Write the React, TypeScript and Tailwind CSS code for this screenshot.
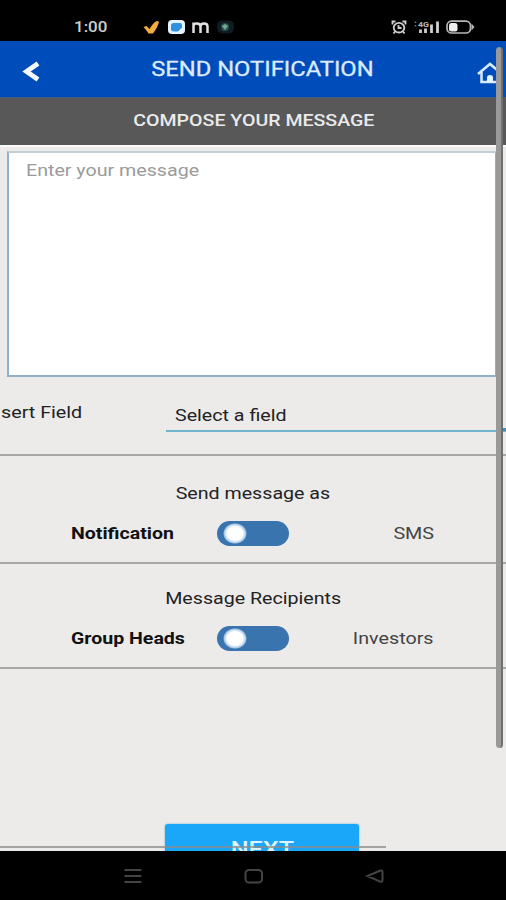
import * as React from "react";

// Roboto drawn a bit wider than its natural width.
const Wide = ({ children, className = "" }: { children: React.ReactNode; className?: string }) => (
  <span className={`inline-block whitespace-nowrap ${className}`}>{children}</span>
);

const StatusBar = () => (
  <div className="h-[41px] bg-black flex items-start pl-[74px] pr-[31px] pt-[18px]">
    <Wide className="w-[67px] origin-left scale-x-[1.13] text-[15px] leading-[18px] font-medium text-[#cfcfcf]">1:00</Wide>
    {/* left icons */}
    <svg width="92" height="18" viewBox="0 0 92 18" className="ml-[1px]">
      <path d="M1.5 9 L4.500 8 L7.500 11 Q11 5 14.500 3 L17 3.500 Q16 9 11 15.500 L6.500 15.500 Q4 11.500 1.500 9 Z" fill="#f2ab3c" />
      <rect x="26" y="2" width="17" height="14" rx="4" fill="#e4f2fb" />
      <path d="M29 7.500 Q29 5 32 5 L38 5 Q40 5 40 7 L40 9.500 L36 13.500 L32 13.500 Q29 13.500 29 11 Z" fill="#2f8fe0" />
      <path d="M51.500 15V4.500M51.500 8 Q51.500 5.500 54.500 5.500 Q58.500 5.500 58.500 8.500 V15 M58.500 8.500 Q58.500 5.500 62 5.500 Q65.500 5.500 65.500 8.500 V15" fill="none" stroke="#e2e2e2" strokeWidth="2.500" />
      <rect x="75" y="2.500" width="17" height="13" rx="5" fill="#101b24" />
      <circle cx="83" cy="9" r="4" fill="#27524a" />
      <path d="M80 8 L83 6 L86 8 L83 12 Z" fill="#74a893" />
    </svg>
    <div className="flex-1" />
    {/* right icons */}
    <svg width="84" height="18" viewBox="0 0 84 18">
      <g fill="none" stroke="#cfcfcf" strokeWidth="1.800">
        <ellipse cx="8" cy="9.700" rx="5.300" ry="4.800" />
        <path d="M1.500 6.500 V3.500 H4.500 M11.500 3.500 H14.500 V6.500 M7.500 7 V10 H10.500 M4 13.500 L2.500 15.500 M12 13.500 L13.500 15.500" />
      </g>
      <text x="27" y="9" fontSize="7.500" textLength="11" lengthAdjust="spacingAndGlyphs" fontFamily="Roboto, sans-serif" fontWeight="700" fill="#b8b8b8">4G</text>
      <path d="M29.500 15V11.500M34.500 15V10.500M40.500 15V6.500M46.500 15V3.500" stroke="#d0d0d0" strokeWidth="2.800" />
      <path d="M24.500 3.500v1.500M24.500 7v1.500" stroke="#777" strokeWidth="1.500" />
      <rect x="56" y="3.200" width="23.500" height="11.800" rx="4.500" fill="none" stroke="#b8b8b8" strokeWidth="1.700" />
      <rect x="58" y="5" width="8.500" height="8.500" rx="2.500" fill="#f0f0f0" />
      <path d="M80.500 5.500 L83.500 9 L80.500 12.500 Z" fill="#b8b8b8" />
    </svg>
  </div>
);

const Header = () => (
  <div className="h-[56px] bg-[#004cba] flex items-start justify-between pl-[22px]">
    <svg width="19" height="22" viewBox="0 0 19 22" className="mt-[19px]">
      <path d="M16 3.500 L4.500 11.500 L16 19.500" fill="none" stroke="#f4f9ff" strokeWidth="4.800" />
    </svg>
    <Wide className="mt-[15px] ml-[6px] scale-x-[1.13] text-[21px] leading-[26px] font-normal [-webkit-text-stroke:0.3px] text-[#dcebff]">SEND NOTIFICATION</Wide>
    <svg width="29" height="24" viewBox="0 0 29 24" className="mt-[19px]">
      <g fill="none" stroke="#d7ecff" strokeWidth="2.500">
        <path d="M1 14 L13 4 L25 14" />
        <path d="M4.500 12 V22 H22 V12" />
      </g>
      <path d="M10 22 V17.500 Q10 15 13 15 Q16 15 16 17.500 V22 Z" fill="#e6f4ff" />
    </svg>
  </div>
);

const Toggle = () => (
  <div className="w-[72px] h-[25px] rounded-full bg-[#3a74af] flex items-center pl-[6px]">
    <div className="w-6 h-[21px] rounded-full bg-[radial-gradient(closest-side,#ffffff_65%,#a9c8e6_90%,#3a74af_100%)]" />
  </div>
);

type SwitchRowProps = {
  title: string;
  left: string;
  right: string;
  className: string;
};

const SwitchRow = ({ title, left, right, className }: SwitchRowProps) => (
  <div className={`border-b-2 border-[#a6a6a5] flex flex-col items-center ${className}`}>
    <Wide className="scale-x-[1.155] text-[17px] leading-5 text-[#222]">{title}</Wide>
    <div className="w-full mt-[18px] pl-[71px] pr-[72px] flex items-center h-[25px]">
      <div className="w-[146px]">
        <Wide className="origin-left scale-x-[1.15] text-[17px] leading-5 font-bold text-[#111]">{left}</Wide>
      </div>
      <Toggle />
      <div className="flex-1 text-right">
        <Wide className="origin-right scale-x-[1.16] text-[17px] leading-5 text-[#444]">{right}</Wide>
      </div>
    </div>
  </div>
);

const NavBar = () => (
  <div className="h-[49px] bg-black flex pt-[16px] pl-[124px]">
    <svg width="262" height="18" viewBox="0 0 262 18">
      <g fill="none" stroke="#444" strokeWidth="2">
        <path d="M0.500 3H17.500M0.500 9H17.500M0.500 15H17.500" />
        <rect x="121.500" y="3" width="16.500" height="12.500" rx="3.500" />
        <path d="M256.500 3.500 L243.500 9 L256.500 14.800 Q258.500 15 258.500 13 V5 Q258.500 3 256.500 3.500 Z" />
      </g>
    </svg>
  </div>
);

const App = () => {
  return (
    <div className="relative w-[506px] h-[900px] overflow-hidden flex flex-col bg-[#ecebea] font-['Roboto',sans-serif]">
      <StatusBar />
      <Header />
      {/* SECTION TITLE */}
      <div className="h-[48px] bg-[#585859] border-t border-[#4b5a78] flex justify-center pt-[12px]">
        <Wide className="ml-[1px] scale-x-[1.15] text-[17px] leading-5 font-medium text-[#eaeaea]">COMPOSE YOUR MESSAGE</Wide>
      </div>
      <div className="h-[706px] overflow-hidden border-t-2 border-[#fafafa]">
        {/* MESSAGE */}
        <div className="mt-1 ml-[7px] w-[490px] h-[226px] bg-white border-2 border-[#8fb0c8] border-t-[#c3d0d8] pl-[17px] pt-[6px]">
          <Wide className="origin-left scale-x-[1.155] text-[17px] leading-5 text-[#9b9b9b]">Enter your message</Wide>
        </div>
        {/* FIELD SELECT */}
        <div className="h-[79px] border-b-2 border-[#a6a6a5] flex">
          <div className="w-[83px] pt-[24px] pl-[1px]">
            <Wide className="origin-left scale-x-[1.16] text-[17px] leading-5 text-[#222]">sert Field</Wide>
          </div>
          <div className="ml-[83px] mt-[27px] h-[28px] flex-1 border-b-2 border-[#6fb3cd] pl-[9px]">
            <Wide className="origin-left scale-x-[1.155] text-[17px] leading-5 text-[#222]">Select a field</Wide>
          </div>
        </div>
        <SwitchRow title="Send message as" left="Notification" right="SMS" className="h-[108px] pt-[27px]" />
        <SwitchRow title="Message Recipients" left="Group Heads" right="Investors" className="h-[105px] pt-[24px]" />
        {/* NEXT */}
        <div className="mt-[155px] ml-[165px] w-[194px] h-[54px] rounded-[3px] bg-[#1aa7fa] shadow-[0_0_2px_#5fa9d0] flex justify-center pt-[12px]">
          <Wide className="scale-x-[1.2] text-[21px] leading-[26px] font-medium text-[#dff3ff]">NEXT</Wide>
        </div>
      </div>
      <NavBar />
      {/* scroll indicators */}
      <div className="absolute left-0 top-[846px] w-[386px] h-[2px] bg-[#8b8b8b]/75" />
      <div className="absolute left-[496px] top-[47px] w-[7px] h-[701px] rounded-full bg-[#999] border-r-2 border-[#707070]" />
      <div className="absolute left-[503px] top-[428px] w-[3px] h-[3px] bg-[#2c97cc]" />
    </div>
  );
};

export default App;
